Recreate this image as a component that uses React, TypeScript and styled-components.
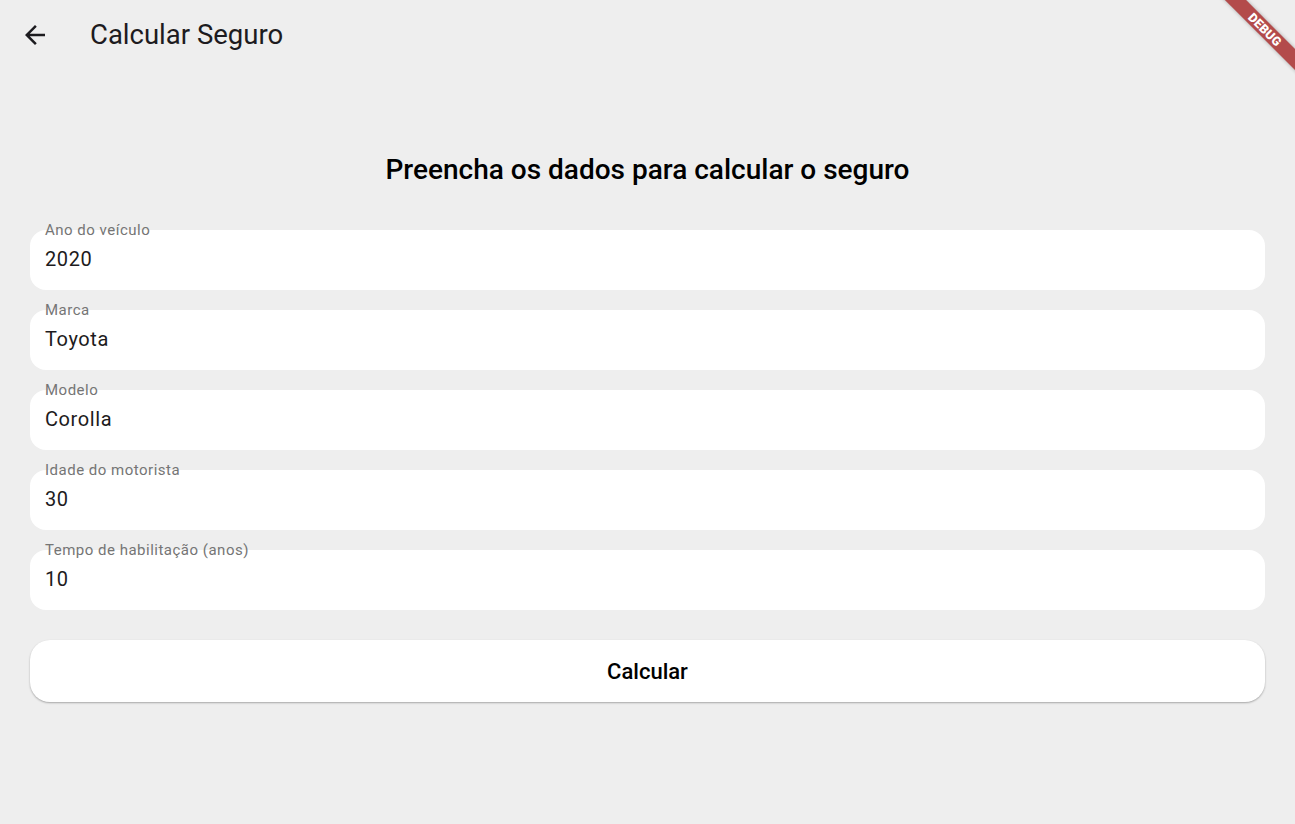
import React from "react";
import styled, { createGlobalStyle } from "styled-components";

const Global = createGlobalStyle`
  html, body { margin: 0; padding: 0; background: #eeeeee; }
  body { font-family: Roboto, "Noto Sans", sans-serif; overflow: hidden; }
`;

const Page = styled.div`
  position: relative;
  width: 1295px;
  height: 824px;
  overflow: hidden;
  background: #eeeeee;
`;

const AppBar = styled.header`
  height: 64px;
  display: flex;
  align-items: center;
  padding: 4px 0 0 15px;
  box-sizing: border-box;
`;

const BackButton = styled.button`
  width: 40px;
  height: 40px;
  border: 0;
  background: transparent;
  display: flex;
  align-items: center;
  justify-content: center;
  padding: 0;
  margin: 2px 35px 0 0;
  color: #1c1b1f;
`;

const Title = styled.h1`
  margin: 0;
  font-size: 27.5px;
  font-weight: 400;
  color: #1d1b20;
`;

const Body = styled.main`
  padding: 89px 30px 0;
  display: flex;
  flex-direction: column;
`;

const Heading = styled.h2`
  margin: 0 0 43px;
  text-align: center;
  font-size: 28px;
  font-weight: 500;
  line-height: 34px;
  color: #000;
`;

const Fields = styled.div`
  display: flex;
  flex-direction: column;
  gap: 20px;
`;

const Field = styled.div`
  position: relative;
  height: 60px;
  background: #ffffff;
  border-radius: 16px;
  display: flex;
  align-items: center;
  padding: 0 15px;
`;

const Label = styled.span`
  position: absolute;
  left: 15px;
  top: -10px;
  font-size: 15px;
  line-height: 20px;
  letter-spacing: 0.5px;
  color: #757575;
`;

const Value = styled.span`
  font-size: 20px;
  letter-spacing: 0.6px;
  color: #1d1b20;
  margin-top: -2px;
`;

const CalcButton = styled.button`
  margin-top: 30px;
  height: 62px;
  border: 0;
  border-radius: 20px;
  background: #ffffff;
  box-shadow: 0 1px 2px rgba(0, 0, 0, 0.3);
  font-family: Roboto, sans-serif;
  font-size: 22px;
  font-weight: 500;
  color: #000;
`;

const Banner = styled.div`
  position: absolute;
  left: 1205px;
  top: 22px;
  width: 120px;
  height: 15px;
  transform: rotate(45deg);
  background: #b34b4b;
  color: #fff;
  font-size: 12.5px;
  font-weight: 900;
  line-height: 15px;
  text-align: center;
  letter-spacing: 0.2px;
  box-shadow: 0 0 4px rgba(0, 0, 0, 0.3);
`;

const fields = [
  { label: "Ano do veículo", value: "2020" },
  { label: "Marca", value: "Toyota" },
  { label: "Modelo", value: "Corolla" },
  { label: "Idade do motorista", value: "30" },
  { label: "Tempo de habilitação (anos)", value: "10" },
];

export default function App() {
  return (
    <Page>
      <Global />
      <AppBar>
        <BackButton aria-label="Voltar">
          <svg width="30" height="30" viewBox="0 0 24 24">
            <path d="M20 11H7.83l5.59-5.59L12 4l-8 8 8 8 1.41-1.41L7.83 13H20v-2z" fill="currentColor" />
          </svg>
        </BackButton>
        <Title>Calcular Seguro</Title>
      </AppBar>
      <Body>
        <Heading>Preencha os dados para calcular o seguro</Heading>
        <Fields>
          {fields.map((f) => (
            <Field key={f.label}>
              <Label>{f.label}</Label>
              <Value>{f.value}</Value>
            </Field>
          ))}
        </Fields>
        <CalcButton>Calcular</CalcButton>
      </Body>
      <Banner>DEBUG</Banner>
    </Page>
  );
}
